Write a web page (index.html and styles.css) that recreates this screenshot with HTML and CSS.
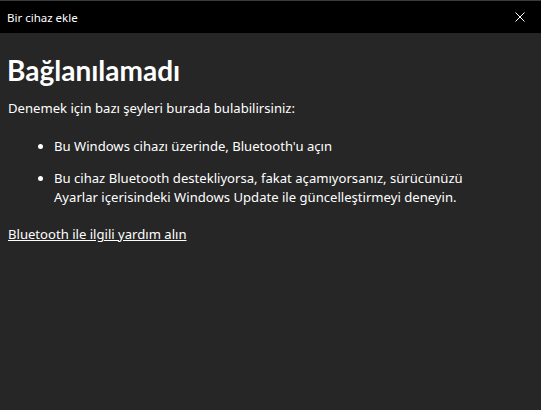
FILE: index.html
```html
<!DOCTYPE html>
<html lang="tr">
<head>
<meta charset="utf-8">
<link rel="stylesheet" href="styles.css">
</head>
<body>
<div class="window">
  <div class="titlebar">
    <span class="title">Bir cihaz ekle</span>
    <span class="close" aria-label="Kapat">
      <svg width="10" height="10" viewBox="0 0 10 10"><path d="M0.5 0.5L9.5 9.5M9.5 0.5L0.5 9.5" stroke="#fff" stroke-width="1"/></svg>
    </span>
  </div>
  <div class="content">
    <h1 class="heading">Bağlanılamadı</h1>
    <p class="intro">Denemek için bazı şeyleri burada bulabilirsiniz:</p>
    <ul class="tips">
      <li>Bu Windows cihazı üzerinde, Bluetooth'u açın</li>
      <li>Bu cihaz Bluetooth destekliyorsa, fakat açamıyorsanız, sürücünüzü<br>Ayarlar içerisindeki Windows Update ile güncelleştirmeyi deneyin.</li>
    </ul>
    <a class="help" href="#">Bluetooth ile ilgili yardım alın</a>
  </div>
</div>
</body>
</html>
```
FILE: styles.css
```css
html, body {
  margin: 0;
  padding: 0;
  height: 100%;
  background: #262626;
}
body {
  font-family: "Noto Sans", "Open Sans", sans-serif;
  color: #ffffff;
}
.window {
  height: 100%;
  display: flex;
  flex-direction: column;
}
.titlebar {
  height: 32px;
  background: #000;
  border-top: 1px solid #3a3a3a;
  display: flex;
  align-items: center;
  justify-content: space-between;
  padding: 0 16px 0 7px;
}
.title {
  font-size: 11.5px;
  color: #fff;
}
.close {
  display: flex;
  width: 10px;
  height: 10px;
}
.content {
  flex: 1;
  padding: 0 8px;
}
.heading {
  margin: 18px 0 0 -1px;
  font-family: "Lato", "Noto Sans", sans-serif;
  font-size: 28px;
  font-weight: 700;
  line-height: 38px;
}
.intro {
  margin: 9px 0 0;
  font-size: 13.1px;
  line-height: 20px;
}
.tips {
  margin: 19px 0 0;
  padding-left: 46px;
  font-size: 13.1px;
  line-height: 19px;
}
.tips li {
  margin-bottom: 13px;
}
.help {
  display: inline-block;
  margin-top: 4px;
  font-size: 13.1px;
  line-height: 20px;
  color: #fff;
  text-decoration: underline;
}
```
